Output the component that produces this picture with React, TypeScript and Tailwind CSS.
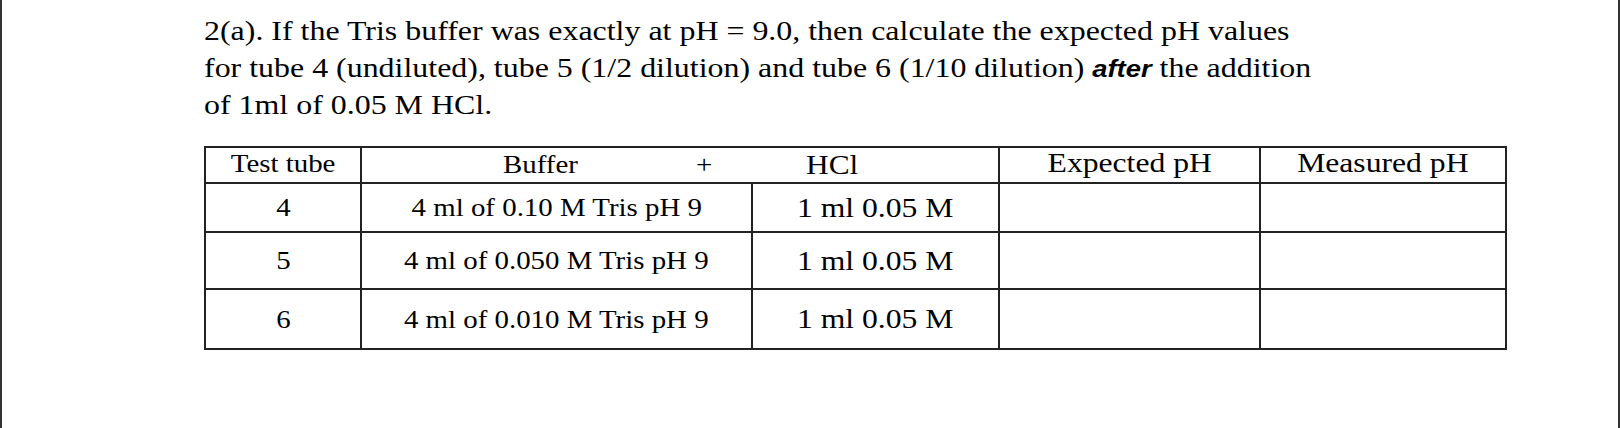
import React from 'react';

const rows = [
  { tube: '4', buffer: '4 ml of 0.10 M Tris pH 9', h: 'h-[49px]' },
  { tube: '5', buffer: '4 ml of 0.050 M Tris pH 9', h: 'h-[57px]' },
  { tube: '6', buffer: '4 ml of 0.010 M Tris pH 9', h: 'h-[60px]' },
];

const cell = 'border-2 border-[#222] text-center align-middle p-0 font-normal';

// the scan is a little wider than the font, so text is stretched sideways
const small = 'inline-block text-[26px] scale-x-[1.11]';
const big = 'inline-block text-[28px] scale-x-[1.13]';

const App = () => {
  return (
    <div className="w-[1620px] h-[428px] bg-white border-l-2 border-r-2 border-[#333] text-black font-['Liberation_Serif','Times_New_Roman',serif]">
      <div className="pl-[202px] pt-[12px]">
        {/* Question */}
        <p className="text-[28px] leading-[37px] origin-left scale-x-[1.14] w-fit">
          2(a). If the Tris buffer was exactly at pH = 9.0, then calculate the expected pH values
          <br />
          for tube 4 (undiluted), tube 5 (1/2 dilution) and tube 6 (1/10 dilution){' '}
          <b className="italic font-bold font-['Liberation_Sans',Arial,sans-serif] text-[24px] leading-none">after</b> the addition
          <br />
          of 1ml of 0.05 M HCl.
        </p>

        {/* Table */}
        <table className="mt-[23px] border-collapse leading-[30px]">
          <colgroup>
            <col className="w-[156px]" />
            <col className="w-[391px]" />
            <col className="w-[247px]" />
            <col className="w-[261px]" />
            <col className="w-[246px]" />
          </colgroup>
          <thead>
            <tr className="h-[36px]">
              <th className={cell}>
                <span className={small}>Test tube</span>
              </th>
              <th colSpan={2} className={cell}>
                <div className="flex items-center pl-[141px]">
                  <span className={`${small} origin-left`}>Buffer</span>
                  <span className={`${small} origin-left ml-[126px]`}>+</span>
                  <span className="inline-block text-[28px] origin-left scale-x-[1.12] ml-[95px]">HCl</span>
                </div>
              </th>
              <th className={cell}>
                <span className={big}>Expected pH</span>
              </th>
              <th className={cell}>
                <span className={big}>Measured pH</span>
              </th>
            </tr>
          </thead>
          <tbody>
            {rows.map((r) => (
              <tr key={r.tube} className={r.h}>
                <td className={`${cell} pt-[4px]`}>
                  <span className={small}>{r.tube}</span>
                </td>
                <td className={`${cell} pt-[4px]`}>
                  <span className={small}>{r.buffer}</span>
                </td>
                <td className={`${cell} pt-[4px]`}>
                  <span className={big}>1 ml 0.05 M</span>
                </td>
                <td className={cell}></td>
                <td className={cell}></td>
              </tr>
            ))}
          </tbody>
        </table>
      </div>
    </div>
  );
};

export default App;
